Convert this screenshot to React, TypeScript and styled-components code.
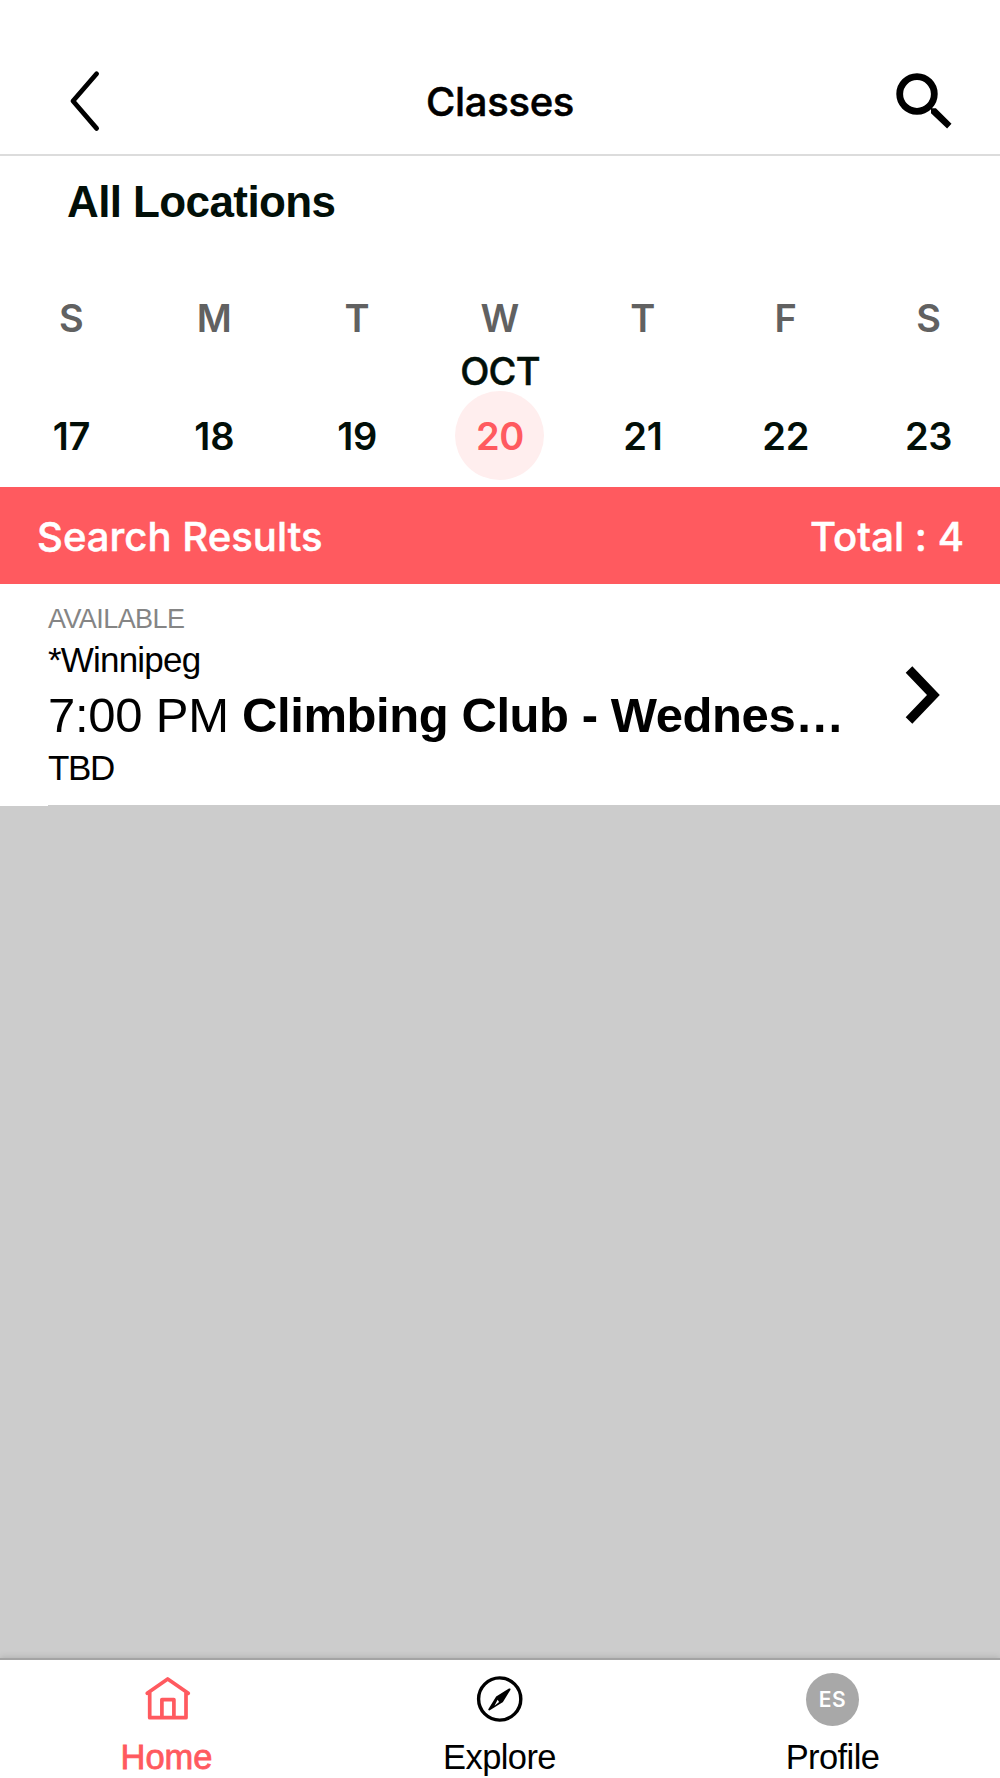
import type { ReactNode } from "react";
import styled, { createGlobalStyle } from "styled-components";

const CORAL = "#ff5a5f";

const GlobalStyle = createGlobalStyle`
  * {
    box-sizing: border-box;
  }

  body {
    margin: 0;
    background: #fff;
    font-family: "Liberation Sans", Arial, sans-serif;
    color: #000;
  }

  svg {
    display: block;
    flex-shrink: 0;
  }
`;

const Page = styled.div`
  display: flex;
  flex-direction: column;
  height: 100vh;
  min-height: 1778px;
  background: #ccc;
`;

const Header = styled.header`
  display: grid;
  grid-template-columns: 1fr auto 1fr;
  align-items: center;
  height: 156px;
  padding: 49px 42px 0 64px;
  border-bottom: 2px solid #dcdcdc;
  background: #fff;
`;

const IconButton = styled.button<{ $align?: string }>`
  justify-self: ${({ $align }) => $align || "start"};
  padding: 0;
  border: none;
  background: none;
`;

const PageTitle = styled.h1`
  margin: 0 0 0 -22px;
  font-family: Inter, sans-serif;
  font-size: 40px;
  font-weight: 500;
  line-height: 50px;
  letter-spacing: -0.3px;
  -webkit-text-stroke: 0.5px currentColor;
`;

const Location = styled.h2`
  margin: 0;
  padding: 21px 67px 0;
  height: 139px;
  background: #fff;
  color: #020f08;
  font-size: 44px;
  font-weight: 700;
  line-height: 50px;
  letter-spacing: -0.6px;
`;

const Week = styled.div`
  display: grid;
  grid-template-columns: repeat(7, 1fr);
  height: 192px;
  background: #fff;
  font-family: Inter, sans-serif;
  font-size: 38px;
  font-weight: 600;
  color: #020f08;
`;

const Day = styled.div`
  display: flex;
  flex-direction: column;
  align-items: center;
`;

const Weekday = styled.span`
  height: 46px;
  line-height: 46px;
  color: #616161;
`;

const Month = styled.span`
  height: 40px;
  margin-top: 10px;
  font-weight: 500;
  line-height: 40px;
  letter-spacing: -0.7px;
  -webkit-text-stroke: 0.5px currentColor;
`;

const DateCircle = styled.span<{ $selected?: boolean }>`
  width: 89px;
  height: 89px;
  border-radius: 50%;
  background: ${({ $selected }) => ($selected ? "#ffeeee" : "transparent")};
  color: ${({ $selected }) => ($selected ? CORAL : "inherit")};
  line-height: 91px;
  text-align: center;
  letter-spacing: -0.3px;
`;

const ResultsBar = styled.div`
  display: flex;
  align-items: center;
  justify-content: space-between;
  height: 97px;
  padding: 2px 36px 0 37px;
  background: ${CORAL};
  color: #fff;
  font-family: Inter, sans-serif;
  font-size: 40px;
  font-weight: 500;
  letter-spacing: 0.05px;
  -webkit-text-stroke: 0.5px currentColor;
`;

const ClassRow = styled.div`
  padding-left: 48px;
  background: #fff;
`;

const ClassContent = styled.div`
  display: flex;
  height: 222px;
  padding: 18px 55px 0 0;
  border-bottom: 1px solid #ccc;
`;

const ClassInfo = styled.div`
  flex: 1;
  min-width: 0;
  padding-top: 1px;
`;

const Status = styled.p`
  margin: 0;
  color: #858585;
  font-size: 27px;
  line-height: 32px;
  letter-spacing: -0.58px;
`;

const Place = styled.p`
  margin: 0;
  font-size: 35px;
  line-height: 50px;
  letter-spacing: -0.8px;
`;

const ClassTitle = styled.p`
  margin: 0;
  font-size: 49px;
  line-height: 61px;
  letter-spacing: -0.25px;
  white-space: nowrap;

  b {
    letter-spacing: -0.43px;
  }
`;

const Instructor = styled.p`
  margin: 0;
  font-size: 35px;
  line-height: 43px;
  letter-spacing: -1.4px;
`;

const TabBar = styled.nav`
  position: relative;
  display: grid;
  grid-template-columns: repeat(3, 1fr);
  height: 120px;
  margin-top: auto;
  padding-right: 1px;
  border-top: 2px solid #a4a4a4;
  background: #fff;
  box-shadow: 0 0 7px rgba(0, 0, 0, 0.18);
`;

const Tab = styled.div<{ $active?: boolean }>`
  display: flex;
  flex-direction: column;
  align-items: center;
  padding-top: 13px;
  color: ${({ $active }) => ($active ? CORAL : "#000")};
  -webkit-text-stroke: ${({ $active }) => ($active ? "0.8px" : "0")} ${CORAL};
`;

const TabIcon = styled.div`
  display: flex;
  justify-content: center;
  height: 54px;
`;

const TabLabel = styled.span<{ $active?: boolean }>`
  margin-top: 10px;
  font-size: 34.5px;
  line-height: 40px;
  letter-spacing: ${({ $active }) => ($active ? "0" : "-0.6px")};
`;

const Avatar = styled.span`
  width: 53px;
  height: 53px;
  border-radius: 50%;
  background: #a8a8a8;
  color: #fff;
  font-family: Inter, sans-serif;
  font-size: 21px;
  font-weight: 600;
  line-height: 54px;
  text-align: center;
  letter-spacing: 0.6px;
`;

const BackIcon = () => (
  <svg width="40" height="63" viewBox="0 0 40 63" fill="none">
    <path
      d="M32.6 3.8 9 31 32.6 58.4"
      stroke="#000"
      strokeWidth="4.8"
      strokeLinecap="round"
      strokeLinejoin="round"
    />
  </svg>
);

const SearchIcon = () => (
  <svg width="68" height="63" viewBox="0 0 68 63">
    <circle cx="27" cy="24" r="17.3" fill="none" stroke="#000" strokeWidth="6.8" />
    <path d="M38.5 35.5 41 38v5.2l16.1 15.4 4.4-4.8L45.9 38.2H42l-2.5-2.6Z" />
  </svg>
);

const NextIcon = () => (
  <svg width="45" height="204" viewBox="0 0 45 204">
    <path d="M12.3 64.3 5.7 70.8 27 93 5.7 115.3l6.6 6.5L39.8 93Z" />
  </svg>
);

const HomeIcon = () => (
  <svg width="60" height="54" viewBox="0 0 60 54" fill="none">
    <path
      d="M10.2 20.3 30.7 6l20.6 14.3M12.7 19.5v25.2H49V19.5M24.9 44.7V26.6h12v18.1"
      stroke="currentColor"
      strokeWidth="3.7"
      strokeLinecap="round"
      strokeLinejoin="round"
    />
  </svg>
);

const ExploreIcon = () => (
  <svg width="60" height="54" viewBox="0 0 60 54">
    <circle cx="29.7" cy="26" r="21.1" fill="none" stroke="#000" strokeWidth="3.4" />
    <path
      d="M39.5 16.4 26.7 24.4 19.3 36.4 32.1 28.4Z"
      stroke="#000"
      strokeWidth="2"
      strokeLinejoin="round"
    />
    <path d="m27.6 26.8 1.5 2.3-4.6 3.6Z" fill="#fff" />
  </svg>
);

interface DayItem {
  weekday: string;
  date: number;
  month?: string;
}

const days: DayItem[] = [
  { weekday: "S", date: 17 },
  { weekday: "M", date: 18 },
  { weekday: "T", date: 19 },
  { weekday: "W", date: 20, month: "OCT" },
  { weekday: "T", date: 21 },
  { weekday: "F", date: 22 },
  { weekday: "S", date: 23 },
];

interface TabItem {
  label: string;
  icon: ReactNode;
}

const tabs: TabItem[] = [
  { label: "Home", icon: <HomeIcon /> },
  { label: "Explore", icon: <ExploreIcon /> },
  { label: "Profile", icon: <Avatar>ES</Avatar> },
];

function App() {
  const selectedDate = 20;
  const activeTab = "Home";

  return (
    <Page>
      <GlobalStyle />
      <Header>
        <IconButton aria-label="Back">
          <BackIcon />
        </IconButton>
        <PageTitle>Classes</PageTitle>
        <IconButton aria-label="Search" $align="end">
          <SearchIcon />
        </IconButton>
      </Header>

      <Location>All Locations</Location>

      <Week>
        {days.map(({ weekday, date, month }) => (
          <Day key={date}>
            <Weekday>{weekday}</Weekday>
            <Month>{month}</Month>
            <DateCircle $selected={date === selectedDate}>{date}</DateCircle>
          </Day>
        ))}
      </Week>

      <ResultsBar>
        <span>Search Results</span>
        <span>Total : 4</span>
      </ResultsBar>

      <ClassRow>
        <ClassContent>
          <ClassInfo>
            <Status>AVAILABLE</Status>
            <Place>*Winnipeg</Place>
            <ClassTitle>
              7:00 PM <b>Climbing Club - Wednes…</b>
            </ClassTitle>
            <Instructor>TBD</Instructor>
          </ClassInfo>
          <NextIcon />
        </ClassContent>
      </ClassRow>

      <TabBar>
        {tabs.map(({ label, icon }) => (
          <Tab key={label} $active={label === activeTab}>
            <TabIcon>{icon}</TabIcon>
            <TabLabel $active={label === activeTab}>{label}</TabLabel>
          </Tab>
        ))}
      </TabBar>
    </Page>
  );
}

export default App;
